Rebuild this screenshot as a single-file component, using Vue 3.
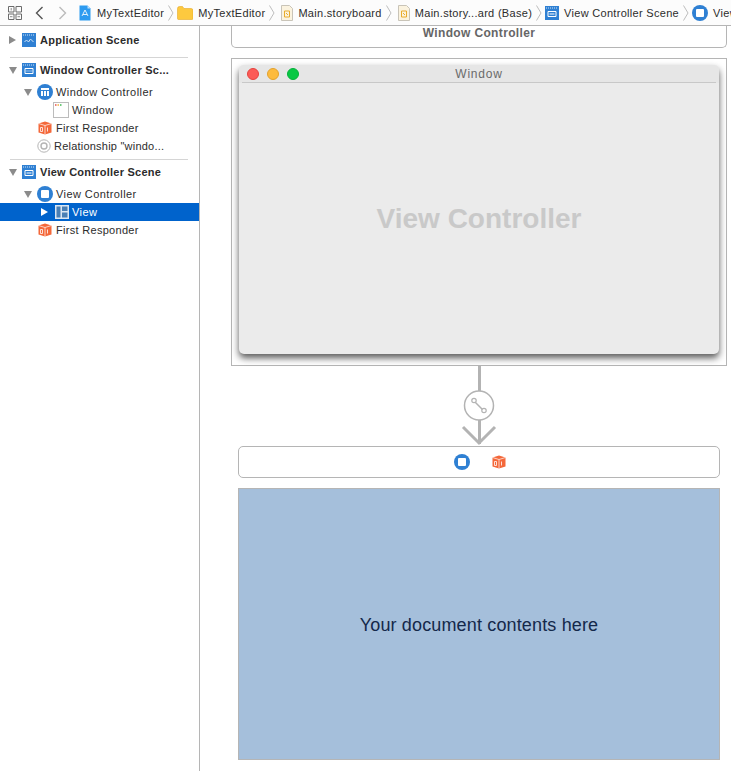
<template>
  <div class="editor">
    <div class="jumpbar">
      <svg class="grid-icon" width="14" height="14" viewBox="0 0 14 14">
        <path d="M.5.500h5.500v5.500H.5zM8 .5h5.500v5.500H8zM.5 8h5.500v5.500H.5zM8 8h5.500v5.500H8z" fill="none" stroke="#6b6b6b" />
        <path d="M2 10.700h2.500M9.500 10.700H12M3.200 2v2.500" stroke="#8a8a8a" />
      </svg>
      <svg class="nav-back" width="9" height="14" viewBox="0 0 9 14"><path d="M7.500 1 1.500 7l6 6" fill="none" stroke="#555" stroke-width="1.400" /></svg>
      <svg class="nav-forward" width="9" height="14" viewBox="0 0 9 14"><path d="M1.500 1l6 6-6 6" fill="none" stroke="#bbb" stroke-width="1.400" /></svg>
      <div class="crumbs">
        <template v-for="(crumb, i) in crumbs" :key="i">
          <svg v-if="crumb.icon === 'project'" class="crumb-icon doc-icon" width="12" height="16" viewBox="0 0 12 16">
            <path d="M.5.500h8l3 3v12H.5z" fill="#2d9bf0" />
            <path d="M8.500.500v3h3z" fill="#bfe0fa" />
            <path d="M3 11l3-6 3 6M4 9.500h4" fill="none" stroke="#dff0fd" />
          </svg>
          <svg v-else-if="crumb.icon === 'folder'" class="crumb-icon" width="16" height="14" viewBox="0 0 16 14">
            <path d="M.5 2.500q0-2 2-2h3l1.500 2h7q2 0 2 2v8q0 1-1 1H1.500q-1 0-1-1z" fill="#fdc93f" stroke="#e5aa28" stroke-width=".6" />
          </svg>
          <svg v-else-if="crumb.icon === 'file'" class="crumb-icon gap-left" width="12" height="16" viewBox="0 0 12 16">
            <path d="M.5.500h8l3 3v12H.5z" fill="#fbf3df" stroke="#c9c4b8" />
            <path d="M3.500 6h5v6h-5zM5 8l2 2" fill="none" stroke="#e9ac2c" />
          </svg>
          <svg v-else-if="crumb.icon === 'scene'" class="crumb-icon" width="14" height="14" viewBox="0 0 14 14">
            <rect width="14" height="14" fill="#2f80d3" />
            <path d="M1 2h12" stroke="#cfe3f7" stroke-dasharray="1 1" />
            <path d="M3 5.500h8v5H3z" fill="none" stroke="#fff" />
            <path d="M4.500 8h5" stroke="#fff" />
          </svg>
          <svg v-else-if="crumb.icon === 'controller'" class="crumb-icon" width="16" height="16" viewBox="0 0 16 16">
            <circle cx="8" cy="8" r="8" fill="#2f80d3" />
            <rect x="4" y="4" width="8" height="8" rx="1" fill="#fff" />
          </svg>
          <span class="crumb-label">{{ crumb.label }}</span>
          <svg v-if="i < crumbs.length - 1" class="crumb-sep" width="6" height="16" viewBox="0 0 6 16"><path d="M.5.500 5 8 .5 15.500" fill="none" stroke="#bdbdbd" /></svg>
        </template>
      </div>
    </div>

    <div class="body">
      <aside class="outline">
        <div class="scene-head first"><span class="tri right"></span><svg class="scene-icon" width="14" height="14" viewBox="0 0 14 14"><rect width="14" height="14" fill="#2f80d3" /><path d="M1 2h12" stroke="#cfe3f7" stroke-dasharray="1 1" /><path d="M2.500 9l2-2 2 2 2-3 3 3" fill="none" stroke="#cfe3f7" /></svg><b>Application Scene</b></div>
        <div class="divider"></div>

        <div class="scene-head"><span class="tri down"></span><svg class="scene-icon" width="14" height="14" viewBox="0 0 14 14"><rect width="14" height="14" fill="#2f80d3" /><path d="M1 2h12" stroke="#cfe3f7" stroke-dasharray="1 1" /><path d="M3 5.500h8v5H3z" fill="none" stroke="#fff" /><path d="M4.500 8h5" stroke="#fff" stroke-dasharray="1 1" /></svg><b>Window Controller Sc...</b></div>
        <div class="row lvl-1 top-gap"><span class="tri down"></span><svg class="obj-icon" width="16" height="16" viewBox="0 0 16 16"><circle cx="8" cy="8" r="8" fill="#2f80d3" /><path d="M4 4h8v8H4z" fill="#fff" /><path d="M4 6.500h8M6.500 6.500V12M9.500 6.500V12" stroke="#2f80d3" /></svg>Window Controller</div>
        <div class="row lvl-2"><svg class="win-icon" width="16" height="16" viewBox="0 0 16 16"><rect x=".5" y=".5" width="15" height="15" fill="#fff" stroke="#bcbcbc" /><path d="M2 3h1.500" stroke="#e8504a" stroke-width="1.500" /><path d="M4.500 3H6" stroke="#efb13a" stroke-width="1.500" /><path d="M7 3h1.500" stroke="#3fb950" stroke-width="1.500" /></svg>Window</div>
        <div class="row lvl-0 tight"><svg class="cube-icon" width="14" height="14" viewBox="0 0 14 14"><path d="M7 .5 13.500 2.500v9L7 13.500.5 11.500v-9z" fill="#f4683a" /><path d="M.5 2.500 7 4.500l6.500-2M7 4.500v9" fill="none" stroke="#fff" stroke-width=".7" /><path d="M2.500 6.500h2v4h-2zM9.500 6.500v4" fill="none" stroke="#fff" stroke-width=".8" /></svg>First Responder</div>
        <div class="row lvl-0 relation"><svg class="ring-icon" width="14" height="14" viewBox="0 0 14 14"><circle cx="7" cy="7" r="6.200" fill="none" stroke="#b5b5b5" /><circle cx="7" cy="7" r="3" fill="none" stroke="#b5b5b5" stroke-width="1.400" /></svg>Relationship "windo...</div>
        <div class="divider second"></div>

        <div class="scene-head"><span class="tri down"></span><svg class="scene-icon" width="14" height="14" viewBox="0 0 14 14"><rect width="14" height="14" fill="#2f80d3" /><path d="M1 2h12" stroke="#cfe3f7" stroke-dasharray="1 1" /><path d="M3 5.500h8v5H3z" fill="none" stroke="#fff" /><path d="M4.500 8h5" stroke="#fff" /></svg><b>View Controller Scene</b></div>
        <div class="row lvl-1 top-gap"><span class="tri down"></span><svg class="obj-icon" width="16" height="16" viewBox="0 0 16 16"><circle cx="8" cy="8" r="8" fill="#2f80d3" /><rect x="4" y="4" width="8" height="8" rx="1" fill="#fff" /></svg>View Controller</div>
        <div class="row lvl-2 selected"><span class="tri right white"></span><svg class="view-icon" width="14" height="14" viewBox="0 0 14 14"><rect width="14" height="14" fill="#dbe6f2" /><path d="M1.500 1.500h4v11h-4zM7 1.500h5.500v4.500H7zM7 7.500h5.500v5H7z" fill="#4a7fb4" /></svg>View</div>
        <div class="row lvl-0 tight"><svg class="cube-icon" width="14" height="14" viewBox="0 0 14 14"><path d="M7 .5 13.500 2.500v9L7 13.500.5 11.500v-9z" fill="#f4683a" /><path d="M.5 2.500 7 4.500l6.500-2M7 4.500v9" fill="none" stroke="#fff" stroke-width=".7" /><path d="M2.500 6.500h2v4h-2zM9.500 6.500v4" fill="none" stroke="#fff" stroke-width=".8" /></svg>First Responder</div>
      </aside>

      <main class="canvas">
        <div class="title-bar">Window Controller</div>
        <div class="window-frame">
          <div class="window">
            <div class="window-top">
              <span class="light red"></span>
              <span class="light amber"></span>
              <span class="light green"></span>
              <span class="window-title">Window</span>
            </div>
            <div class="window-body">View Controller</div>
          </div>
        </div>

        <svg class="segue" width="40" height="80" viewBox="0 0 40 80">
          <path d="M20.500 0v25M20.500 54v24" stroke="#b3b3b3" stroke-width="3" fill="none" />
          <circle cx="20" cy="39.500" r="14.500" fill="#fff" stroke="#b3b3b3" stroke-width="1.500" />
          <path d="M15.500 35.500 24.500 44.500" stroke="#b3b3b3" stroke-width="1.500" />
          <circle cx="15" cy="34.500" r="2.200" fill="#fff" stroke="#b3b3b3" stroke-width="1.200" />
          <circle cx="25" cy="44.500" r="2.200" fill="#fff" stroke="#b3b3b3" stroke-width="1.200" />
          <path d="M4 61 20 77 36 61" fill="none" stroke="#b3b3b3" stroke-width="3" />
        </svg>

        <div class="dock">
          <svg width="16" height="16" viewBox="0 0 16 16"><circle cx="8" cy="8" r="8" fill="#2f80d3" /><rect x="4" y="4" width="8" height="8" rx="1" fill="#fff" /></svg>
          <svg width="14" height="14" viewBox="0 0 14 14"><path d="M7 .5 13.500 2.500v9L7 13.500.5 11.500v-9z" fill="#f4683a" /><path d="M.5 2.500 7 4.500l6.500-2M7 4.500v9" fill="none" stroke="#fff" stroke-width=".7" /><path d="M2.500 6.500h2v4h-2zM9.500 6.500v4" fill="none" stroke="#fff" stroke-width=".8" /></svg>
        </div>
        <div class="doc">Your document contents here</div>
      </main>
    </div>
  </div>
</template>

<script setup>
const crumbs = [
  { icon: 'project', label: 'MyTextEditor' },
  { icon: 'folder', label: 'MyTextEditor' },
  { icon: 'file', label: 'Main.storyboard' },
  { icon: 'file', label: 'Main.story...ard (Base)' },
  { icon: 'scene', label: 'View Controller Scene' },
  { icon: 'controller', label: 'View Controller' },
]
</script>

<style>
html, body {
  margin: 0;
  background: #fff;
  overflow: hidden;
}
</style>

<style scoped>
.editor {
  width: 731px;
  height: 771px;
  overflow: hidden;
  background: #fff;
  font-family: "Liberation Sans", Arial, sans-serif;
  font-size: 11px;
  color: #2c2c2c;
}

.jumpbar {
  height: 26px;
  box-sizing: border-box;
  display: flex;
  align-items: center;
  padding-left: 8px;
  border-bottom: 1px solid #b5b5b5;
  white-space: nowrap;
  overflow: hidden;
  background: #fcfcfc;
}

.jumpbar svg { flex: none; }
.nav-back { margin-left: 13px; }
.nav-forward { margin-left: 14px; }

.crumbs {
  display: flex;
  flex: none;
  align-items: center;
  margin-left: 12px;
}

.doc-icon { margin-right: 1px; }
.gap-left { margin-left: 3px; }
.crumb-label { margin-left: 5px; letter-spacing: .3px; }
.crumb-sep { margin: 0 3px 0 4px; }

.body {
  display: flex;
  height: 745px;
}

.outline {
  width: 199px;
  flex: none;
  border-right: 1px solid #b5b5b5;
  letter-spacing: .42px;
}

.scene-head, .row {
  display: flex;
  align-items: center;
  height: 18px;
  white-space: nowrap;
}

.scene-head { padding-left: 9px; }
.scene-head.first { margin-top: 5px; }
.scene-head b { font-weight: 700; letter-spacing: .25px; }
.scene-icon { margin: 0 4px 0 5px; }
.tri.right + .scene-icon { margin-left: 6px; }

.divider {
  height: 1px;
  background: #d5d5d5;
  margin: 8px 11px 3px 10px;
}
.divider.second { margin-top: 4px; margin-bottom: 3px; }

.top-gap { margin-top: 4px; }
.lvl-1 { padding-left: 24px; }
.lvl-2 { padding-left: 53px; }
.lvl-0 { padding-left: 38px; }
.tight { letter-spacing: .3px; }
.relation { padding-left: 37px; letter-spacing: .22px; }

.obj-icon { margin: 0 3px 0 5px; }
.win-icon { margin-right: 3px; }
.cube-icon { margin-right: 4px; }
.ring-icon { margin-right: 3px; }
.view-icon { margin-right: 3px; }

.tri { display: block; flex: none; width: 0; height: 0; }
.tri.right {
  border-left: 7px solid #8b8b8b;
  border-top: 4.500px solid transparent;
  border-bottom: 4.500px solid transparent;
}
.tri.down {
  border-top: 7px solid #8b8b8b;
  border-left: 4.500px solid transparent;
  border-right: 4.500px solid transparent;
}
.tri.white { border-left-color: #fff; }

.selected {
  background: #0063cc;
  color: #fff;
  padding-left: 41px;
}
.selected .tri { margin-right: 7px; }

.canvas {
  flex: 1;
  overflow: hidden;
  display: flex;
  flex-direction: column;
  align-items: flex-start;
  padding-left: 31px;
}

.title-bar {
  width: 496px;
  height: 22px;
  box-sizing: border-box;
  flex: none;
  border: 1px solid #b5b5b5;
  border-top: none;
  border-radius: 0 0 5px 5px;
  text-align: center;
  line-height: 14px;
  font-weight: 700;
  font-size: 12px;
  letter-spacing: .35px;
  color: #666;
}

.window-frame {
  width: 496px;
  height: 308px;
  box-sizing: border-box;
  flex: none;
  margin-top: 10px;
  border: 1px solid #b5b5b5;
  padding: 6px 7px 0;
}

.window {
  width: 480px;
  height: 289px;
  border-radius: 5px;
  background: #ebebeb;
  box-shadow: 0 4px 7px rgba(0, 0, 0, .65);
  display: flex;
  flex-direction: column;
}

.window-top {
  height: 18px;
  flex: none;
  display: flex;
  align-items: center;
  gap: 8px;
  padding-left: 8px;
  position: relative;
  background: #e6e6e6;
  border-radius: 5px 5px 0 0;
}
.window-top::after {
  content: "";
  position: absolute;
  left: 3px;
  right: 3px;
  bottom: 0;
  height: 1px;
  background: #c8c8c8;
}

.light {
  width: 12px;
  height: 12px;
  border-radius: 50%;
  box-sizing: border-box;
}
.light.red { background: #fc5b57; border: 1px solid #e5443f; }
.light.amber { background: #fdbb3e; border: 1px solid #e4a22d; }
.light.green { background: #08c844; border: 1px solid #06b23a; }

.window-title {
  position: absolute;
  left: 0;
  right: 0;
  text-align: center;
  font-size: 12px;
  color: #6a6a6a;
  letter-spacing: .8px;
}

.window-body {
  flex: 1;
  display: flex;
  align-items: center;
  justify-content: center;
  font-size: 28px;
  font-weight: 700;
  color: #c9c9c9;
}

.segue {
  display: block;
  margin-left: 228px;
  flex: none;
}

.dock {
  width: 482px;
  height: 32px;
  box-sizing: border-box;
  margin-left: 7px;
  padding-left: 2px;
  border: 1px solid #b5b5b5;
  border-radius: 5px;
  display: flex;
  align-items: center;
  justify-content: center;
  gap: 22px;
  flex: none;
}

.doc {
  width: 482px;
  height: 272px;
  box-sizing: border-box;
  margin-top: 10px;
  margin-left: 7px;
  padding-top: 2px;
  background: #a5bfdb;
  border: 1px solid #b5b5b5;
  display: flex;
  align-items: center;
  justify-content: center;
  font-size: 18px;
  letter-spacing: .15px;
  color: #14284a;
  flex: none;
}
</style>
